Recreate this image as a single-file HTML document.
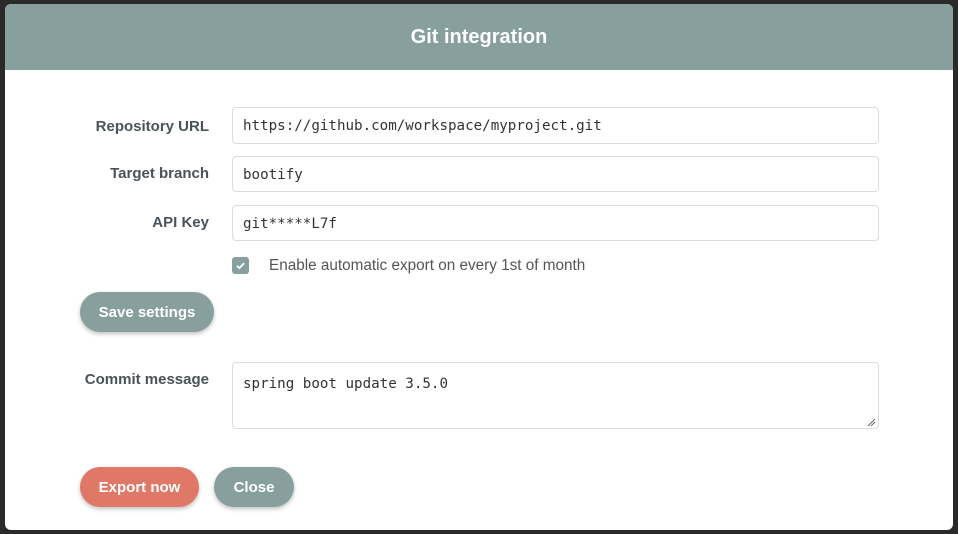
<!DOCTYPE html>
<html><head><meta charset="utf-8"><style>
*{box-sizing:border-box;margin:0;padding:0}
body{width:958px;height:534px;background:#2a2a2a;font-family:"Liberation Sans",sans-serif;position:relative;overflow:hidden}
.modal{position:absolute;left:5px;top:4px;width:948px;height:526px;background:#fff;border-radius:6px;overflow:hidden}
.hdr{height:66px;background:#87a09e;color:#fff;font-size:20px;font-weight:bold;text-align:center;line-height:66px}
.lbl{position:absolute;right:744px;font-size:15px;font-weight:bold;color:#4a5358;text-align:right;white-space:nowrap}
.inp{position:absolute;left:227px;width:647px;border:1px solid #dcdcdc;border-radius:4px;font-family:"DejaVu Sans Mono","Liberation Mono",monospace;font-size:14.2px;color:#333;padding-left:10px}
.btn{position:absolute;height:40px;border-radius:20px;color:#fff;font-weight:bold;font-size:15px;text-align:center;line-height:41px;box-shadow:0 2px 4px rgba(0,0,0,.25)}
</style></head><body>
<div class="modal">
<div class="hdr">Git integration</div>
<div class="lbl" style="top:114px">Repository URL</div>
<div class="inp" style="top:103px;height:37px;line-height:37px">https://github.com/workspace/myproject.git</div>
<div class="lbl" style="top:161px">Target branch</div>
<div class="inp" style="top:152px;height:36px;line-height:36px">bootify</div>
<div class="lbl" style="top:210px">API Key</div>
<div class="inp" style="top:201px;height:36px;line-height:36px">git*****L7f</div>
<div style="position:absolute;left:227px;top:253px;width:17px;height:17px;border-radius:3px;background:#87a09e"><svg width="17" height="17" viewBox="0 0 17 17"><path d="M5 8.8l2.4 2.3 4.6-4.8" stroke="#fff" stroke-width="1.8" fill="none"/></svg></div>
<div style="position:absolute;left:264px;top:253px;font-size:15.3px;color:#555">Enable automatic export on every 1st of month</div>
<div class="btn" style="left:75px;top:288px;width:134px;background:#87a09e">Save settings</div>
<div class="lbl" style="top:367px">Commit message</div>
<div class="inp" style="top:358px;height:67px;padding-top:13px">spring boot update 3.5.0</div>
<svg style="position:absolute;left:861px;top:413px" width="10" height="10"><path d="M2 9L9 2M5 9L9 5" stroke="#666" stroke-width="1"/></svg>
<div class="btn" style="left:75px;top:463px;width:119px;background:#df7867">Export now</div>
<div class="btn" style="left:209px;top:463px;width:80px;background:#87a09e">Close</div>
</div>
</body></html>
